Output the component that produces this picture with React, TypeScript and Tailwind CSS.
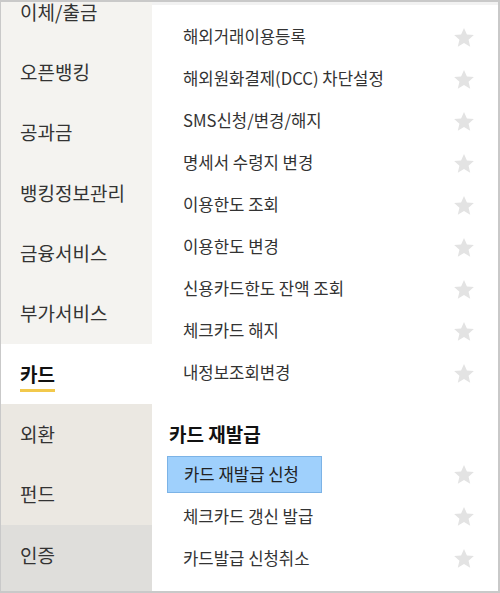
const sideItems = [
  { label: "이체/출금", tone: "light" },
  { label: "오픈뱅킹", tone: "light" },
  { label: "공과금", tone: "light" },
  { label: "뱅킹정보관리", tone: "light" },
  { label: "금융서비스", tone: "light" },
  { label: "부가서비스", tone: "light" },
  { label: "카드", tone: "active" },
  { label: "외환", tone: "warm" },
  { label: "펀드", tone: "warm" },
  { label: "인증", tone: "gray" },
];

const cardMenus = [
  "해외거래이용등록",
  "해외원화결제(DCC) 차단설정",
  "SMS신청/변경/해지",
  "명세서 수령지 변경",
  "이용한도 조회",
  "이용한도 변경",
  "신용카드한도 잔액 조회",
  "체크카드 해지",
  "내정보조회변경",
];

const reissueMenus = ["카드 재발급 신청", "체크카드 갱신 발급", "카드발급 신청취소"];

function Star() {
  return (
    <svg width="22" height="21" viewBox="0 0 24 23" aria-hidden="true">
      <path
        d="M12 1l3.2 7.1 7.6.7-5.8 5.1 1.8 7.6L12 17.5l-6.8 4 1.8-7.6L1.2 8.8l7.6-.7z"
        fill="#e3e3e3"
      />
    </svg>
  );
}

function SideItem({ label, tone }: { label: string; tone: string }) {
  const bg =
    tone === "active"
      ? "bg-white"
      : tone === "warm"
        ? "bg-[#ebe8e2]"
        : tone === "gray"
          ? "bg-[#dfdedb]"
          : "bg-[#f4f3f0]";
  return (
    <div className={`h-[60.3px] shrink-0 flex items-center pl-[19px] ${bg}`}>
      {tone === "active" ? (
        <span className="relative text-[19px] font-bold text-[#111]">
          {label}
          <span className="absolute left-0 right-0 -bottom-[4px] h-[3px] bg-[#f2c94c]" />
        </span>
      ) : (
        <span className="text-[19px] text-[#333]">{label}</span>
      )}
    </div>
  );
}

function MenuRow({ label, selected }: { label: string; selected?: boolean }) {
  return (
    <div className="h-[42px] shrink-0 flex items-center justify-between pr-[23px]">
      {selected ? (
        <div className="ml-[15px] h-[37px] w-[155px] flex items-center pl-[16px] bg-[#9fd0fc] border border-[#7cb3e6] text-[16.7px] text-[#222]">
          {label}
        </div>
      ) : (
        <span className="pl-[31px] text-[16.7px] text-[#333]">{label}</span>
      )}
      <Star />
    </div>
  );
}

export default function App() {
  return (
    <div
      className="w-[500px] h-[593px] overflow-hidden flex border-l border-t-2 border-r-2 border-b-2 border-[#c9c9c9] bg-white"
      style={{ fontFamily: '"Noto Sans CJK KR", "Noto Sans", sans-serif' }}
    >
      <div className="w-[151px] shrink-0 flex flex-col -mt-[20px] bg-[#dfdedb]">
        {sideItems.map((item) => (
          <SideItem key={item.label} label={item.label} tone={item.tone} />
        ))}
      </div>
      <div className="flex-1 flex flex-col pt-[11px] border-t-[3px] border-[#f2f2f2]">
        {cardMenus.map((m) => (
          <MenuRow key={m} label={m} />
        ))}
        <div className="pl-[17px] pt-[26px] pb-[5px] text-[19px] font-bold text-[#111]">카드 재발급</div>
        {reissueMenus.map((m, i) => (
          <MenuRow key={m} label={m} selected={i === 0} />
        ))}
      </div>
    </div>
  );
}
